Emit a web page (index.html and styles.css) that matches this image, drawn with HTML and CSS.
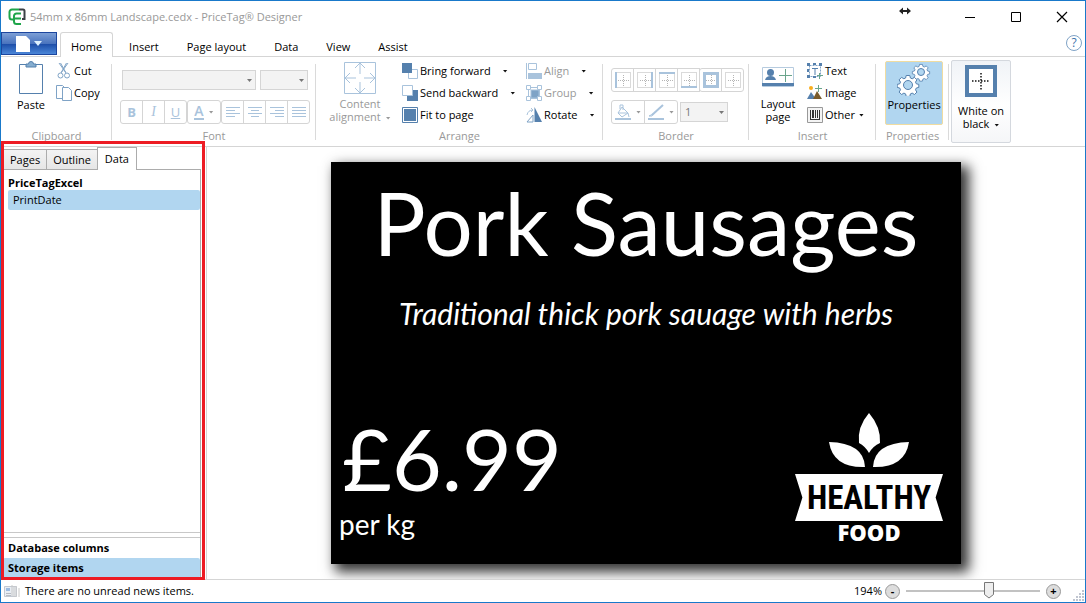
FILE: index.html
```html
<!DOCTYPE html>
<html lang="en">
<head>
<meta charset="utf-8">
<title>PriceTag Designer</title>
<link rel="stylesheet" href="styles.css">
</head>
<body>
<div class="window">
  <header class="titlebar">
    <svg class="app-icon" width="18" height="18" viewBox="0 0 18 18" fill="none" stroke-width="2">
      <path d="M11 1.500H4a2.500 2.500 0 0 0-2.500 2.500v5A2.500 2.500 0 0 0 4 11.500h2M13 5.500H8.500A2.500 2.500 0 0 0 6 8v5.500A2.500 2.500 0 0 0 8.500 16H13M6 10.500h7" stroke="#1ea54a"/>
      <path d="M11 1.500h4a1.500 1.500 0 0 1 1.500 1.500v8H14" stroke="#3b4045"/>
    </svg>
    <h1 class="title">54mm x 86mm Landscape.cedx - PriceTag® Designer</h1>
    <svg class="resize-mark" width="12" height="8" viewBox="0 0 12 8"><path d="M0 4l4-3.500v2.500h4V.5L12 4 8 7.500V5H4v2.500z" fill="#222"/></svg>
    <div class="window-buttons">
      <button class="win-btn" aria-label="Minimize"><svg width="12" height="12"><path d="M1 6.500h10" stroke="#000"/></svg></button>
      <button class="win-btn" aria-label="Maximize"><svg width="12" height="12"><path d="M1.500 1.500h9v9h-9z" fill="none" stroke="#000"/></svg></button>
      <button class="win-btn" aria-label="Close"><svg width="12" height="12"><path d="M1 1l10 10M11 1L1 11" stroke="#000" stroke-width="1.200"/></svg></button>
    </div>
  </header>

  <nav class="ribbon-tabs">
    <button class="file-btn" aria-label="File">
      <svg width="14" height="16"><path d="M0 0h10l4 4v12H0z" fill="#fff"/></svg>
      <svg width="8" height="5"><path d="M0 0h8L4 5z" fill="#dff1ff"/></svg>
    </button>
    <button class="tab tab-active">Home</button>
    <button class="tab">Insert</button>
    <button class="tab">Page layout</button>
    <button class="tab">Data</button>
    <button class="tab">View</button>
    <button class="tab">Assist</button>
    <button class="help" aria-label="Help">?</button>
  </nav>

  <section class="ribbon">
    <div class="group group-clipboard">
      <div class="group-body">
        <button class="big-btn paste">
          <svg width="26" height="34" viewBox="0 0 26 34"><path d="M1.500 3.500h23v29h-23z" fill="#fff" stroke="#5580ad"/><path d="M8 6V3h2.500a2.500 2.500 0 0 1 5 0H18v3z" fill="#86aed0" stroke="#5580ad"/></svg>
          <span>Paste</span>
        </button>
        <div class="stack stack-edit">
          <button class="cmd"><svg width="16" height="16" viewBox="0 0 16 16" fill="none" stroke="#7fa3c6"><path d="M3 0l7 10M12 0L5 10M4.500 0l5 9M10.500 0l-5 9"/><circle cx="4.500" cy="12.500" r="2.500"/><circle cx="11" cy="12.500" r="2.500"/></svg>Cut</button>
          <button class="cmd"><svg width="16" height="16" viewBox="0 0 16 16" fill="#fff" stroke="#7fa3c6"><path d="M.5.500h6l3 3v10h-9z"/><path d="M6.500 2.500h6l3 3v10h-9z"/></svg>Copy</button>
        </div>
      </div>
      <h2 class="group-label">Clipboard</h2>
    </div>

    <div class="group group-font">
      <div class="group-body rows">
        <div class="row row-top">
          <span class="combo combo-font"><select aria-label="Font family" disabled><option></option></select></span>
          <span class="combo combo-size"><select aria-label="Font size" disabled><option></option></select></span>
        </div>
        <div class="row">
          <button class="tool" disabled aria-label="Bold"><b>B</b></button>
          <button class="tool" disabled aria-label="Italic"><i>I</i></button>
          <button class="tool seg-end" disabled aria-label="Underline"><u>U</u></button>
          <button class="tool tool-wide seg-start seg-end" disabled aria-label="Font color"><span class="fontcolor">A</span><span class="caret caret-off"></span></button>
          <button class="tool seg-start" disabled aria-label="Align left"><svg width="14" height="12"><path d="M0 1.500h14M0 4.500h9M0 7.500h14M0 10.500h9" stroke="#a9c3dc"/></svg></button>
          <button class="tool" disabled aria-label="Align center"><svg width="14" height="12"><path d="M0 1.500h14M3 4.500h8M0 7.500h14M3 10.500h8" stroke="#a9c3dc"/></svg></button>
          <button class="tool" disabled aria-label="Align right"><svg width="14" height="12"><path d="M0 1.500h14M5 4.500h9M0 7.500h14M5 10.500h9" stroke="#a9c3dc"/></svg></button>
          <button class="tool seg-end" disabled aria-label="Justify"><svg width="14" height="12"><path d="M0 1.500h14M0 4.500h14M0 7.500h14M0 10.500h14" stroke="#a9c3dc"/></svg></button>
        </div>
      </div>
      <h2 class="group-label">Font</h2>
    </div>

    <div class="group group-arrange">
      <div class="group-body">
        <button class="big-btn content-align" disabled>
          <svg width="34" height="34" viewBox="0 0 34 34" fill="none" stroke="#a9c3dc"><path d="M1.500 1.500h31v31h-31z"/><path d="M17 13V3M12 7l5-5 5 5M17 21v10M12 27l5 5 5-5M13 17H3M7 12l-5 5 5 5M21 17h10M27 12l5 5-5 5"/></svg>
          <span>Content<br>alignment <span class="caret caret-off"></span></span>
        </button>
        <div class="stack stack-order">
          <button class="cmd"><svg width="16" height="16"><path d="M6.500 6.500h9v9h-9z" fill="#fff" stroke="#a9c3dc"/><path d="M0 0h10v10H0z" fill="#5580ad"/></svg>Bring forward<span class="caret caret-far"></span></button>
          <button class="cmd"><svg width="16" height="16"><path d="M5 5h11v11H5z" fill="#5580ad"/><path d="M.5.500h10v10H.5z" fill="#fff" stroke="#a9c3dc"/></svg>Send backward<span class="caret caret-far"></span></button>
          <button class="cmd"><svg width="16" height="16"><path d="M.5.500h15v15H.5z" fill="#fff" stroke="#5580ad"/><path d="M2 2h12v12H2z" fill="#5580ad"/></svg>Fit to page</button>
        </div>
        <div class="stack">
          <button class="cmd" disabled><svg width="16" height="16" fill="none" stroke="#a9c3dc"><path d="M.5 0v16M2.500.500h8v6h-8z"/><path d="M2 10h14v6H2z" fill="#a9c3dc" stroke="none"/></svg>Align<span class="caret caret-far"></span></button>
          <button class="cmd" disabled><svg width="16" height="16" fill="#fff" stroke="#a9c3dc"><path d="M5 5h8v8H5z" fill="#7fa3c6"/><path d="M2.500 2.500h11v11h-11z" fill="none"/><path d="M.5.500h4v4h-4zM11.500.500h4v4h-4zM.5 11.500h4v4h-4zM11.500 11.500h4v4h-4z"/></svg>Group<span class="caret caret-far"></span></button>
          <button class="cmd"><svg width="16" height="16"><path d="M8.500 0v15H16z" fill="#5580ad"/><path d="M7 8v7H1z" fill="#fff" stroke="#7fa3c6"/><path d="M1 8q1-5 6-5M5 1l2 2-2 2" fill="none" stroke="#a9c3dc"/></svg>Rotate<span class="caret caret-far"></span></button>
        </div>
      </div>
      <h2 class="group-label">Arrange</h2>
    </div>

    <div class="group group-border">
      <svg class="defs" width="0" height="0"><defs><g id="cell" fill="none" stroke="#b5b5b5" stroke-dasharray="1 1"><path d="M.5.500h15v15H.5zM8.500 3v11M3 8.500h11"/></g></defs></svg>
      <div class="group-body rows">
        <div class="row">
          <button class="tool" disabled aria-label="Left border"><svg width="16" height="16"><use href="#cell"/><path d="M0 0h2v16H0z" fill="#a9c3dc"/></svg></button>
          <button class="tool" disabled aria-label="Right border"><svg width="16" height="16"><use href="#cell"/><path d="M14 0h2v16h-2z" fill="#a9c3dc"/></svg></button>
          <button class="tool" disabled aria-label="Top border"><svg width="16" height="16"><use href="#cell"/><path d="M0 0h16v2H0z" fill="#a9c3dc"/></svg></button>
          <button class="tool" disabled aria-label="Bottom border"><svg width="16" height="16"><use href="#cell"/><path d="M0 14h16v2H0z" fill="#a9c3dc"/></svg></button>
          <button class="tool seg-start" disabled aria-label="All borders"><svg width="16" height="16"><use href="#cell"/><path d="M1.500 1.500h13v13h-13z" fill="none" stroke="#a9c3dc" stroke-width="3"/></svg></button>
          <button class="tool seg-end" disabled aria-label="No border"><svg width="16" height="16"><use href="#cell"/></svg></button>
        </div>
        <div class="row">
          <button class="tool tool-wide" disabled aria-label="Fill color"><svg width="16" height="16" fill="none" stroke="#a9c3dc"><path d="M7 3l6 6-6 4-4-4zM5 5V1h3v5M3 9h10l1 4"/><path d="M0 15h16" stroke-width="2"/></svg><span class="caret caret-off"></span></button>
          <button class="tool tool-wide seg-end" disabled aria-label="Line color"><svg width="16" height="16" fill="none" stroke="#a9c3dc"><path d="M4 11L15 1" stroke-width="2"/><path d="M1 12l4-2-1 2z"/><path d="M0 15h16" stroke-width="2"/></svg><span class="caret caret-off"></span></button>
          <span class="combo combo-line"><select aria-label="Line width" disabled><option>1</option></select></span>
        </div>
      </div>
      <h2 class="group-label">Border</h2>
    </div>

    <div class="group group-insert">
      <div class="group-body">
        <button class="big-btn layout-page">
          <svg width="34" height="34" viewBox="0 0 34 34"><path d="M1.500 6.500h31v19h-31z" fill="#fff" stroke="#b6cbdf"/><path d="M1 22h32v3H1z" fill="#5580ad"/><circle cx="9.500" cy="11.500" r="3.500" fill="#5580ad"/><path d="M4 19q1-4 5.500-4t5.500 4z" fill="#5580ad"/><path d="M24.500 8v13M18 14.500h13" stroke="#6aa58c"/></svg>
          <span>Layout<br>page</span>
        </button>
        <div class="stack">
          <button class="cmd"><svg width="16" height="16" fill="none"><path d="M2.500 2.500h11v11h-11z" stroke="#7fa3c6" stroke-dasharray="2 1"/><path d="M0 0h3v3H0zM6 0h3v2H6zM12 0h3v3h-3zM0 12h3v3H0zM0 6h2v3H0zM6 13h3v2H6z" fill="#5580ad"/><path d="M5 5.500h6M8 5v7" stroke="#5580ad"/><path d="M12.500 10v6M10 12.500h6" stroke="#6aa58c"/></svg>Text</button>
          <button class="cmd"><svg width="16" height="16"><path d="M0 14l4-7 5 7z" fill="#5580ad"/><path d="M6 14l4-8 5 8z" fill="#7a5c2c"/><circle cx="4" cy="3" r="2" fill="#f9ad1c"/><path d="M11.500 0v7M8 3.500h7" stroke="#6aa58c"/></svg>Image</button>
          <button class="cmd"><svg width="16" height="16"><path d="M.5.500h15v15H.5z" fill="#f4f4f4" stroke="#999"/><path d="M3 3h1v10H3zM5 3h2v8H5zM8 3h1v8H8zM10 3h1v8h-1zM12 3h1v10h-1zM4 12h8v1H4z" fill="#333"/></svg>Other<span class="caret"></span></button>
        </div>
      </div>
      <h2 class="group-label">Insert</h2>
    </div>

    <div class="group group-properties">
      <div class="group-body">
        <button class="big-btn properties" aria-pressed="true">
          <svg width="34" height="34" viewBox="0 0 34 34" fill="#fff" stroke="#5580ad" stroke-linejoin="round">
            <defs><path id="gear" d="M-1.800-9.500h3.600l.6 2.500 1.800.8 2.300-1.400 2.400 2.400-1.400 2.300.8 1.700 2.500.600v3l-2.500.600-.8 1.800 1.400 2.300-2.400 2.400-2.300-1.400-1.800.8-.6 2.500h-3.600l-.6-2.500-1.700-.8-2.300 1.400-2.500-2.400 1.400-2.300-.8-1.800-2.500-.6v-3l2.500-.6.800-1.700-1.400-2.300 2.500-2.400 2.300 1.400 1.700-.8z"/></defs>
            <use href="#gear" transform="translate(24 10) scale(.8)"/><circle cx="24" cy="10" r="3.500" fill="#b1d6f0"/>
            <use href="#gear" transform="translate(11 23)"/><circle cx="11" cy="23" r="4.500" fill="#b1d6f0"/>
          </svg>
          <span>Properties</span>
        </button>
      </div>
      <h2 class="group-label">Properties</h2>
    </div>

    <button class="style-card">
      <svg width="32" height="32"><path d="M2 2h28v28H2z" fill="#fff" stroke="#5580ad" stroke-width="4"/><path d="M16 8v17M7 16h18" stroke="#111" stroke-width="1.500" stroke-dasharray="1.500 1.500"/></svg>
      <span>White on<br>black <span class="caret"></span></span>
    </button>
  </section>

  <main class="main">
    <aside class="sidebar">
      <div class="side-tabs">
        <button class="side-tab">Pages</button>
        <button class="side-tab">Outline</button>
        <button class="side-tab side-tab-active">Data</button>
      </div>
      <div class="side-panel">
        <div class="data-list">
          <h3 class="source">PriceTagExcel</h3>
          <button class="field">PrintDate</button>
        </div>
        <div class="categories">
          <button class="category">Database columns</button>
          <button class="category category-active">Storage items</button>
        </div>
      </div>
      <div class="highlight"></div>
    </aside>

    <section class="canvas">
      <article class="card">
        <h2 class="product">Pork Sausages</h2>
        <p class="description">Traditional thick pork sauage with herbs</p>
        <div class="card-foot">
          <div>
            <p class="price">£6.99</p>
            <p class="unit">per kg</p>
          </div>
          <div class="badge">
            <svg width="80" height="56" viewBox="0 0 80 56" fill="#fff"><path d="M40 0Q28 14 30 30q6 3 10 10 4-7 11-10Q52 14 40 0z"/><path d="M0 29q35 1 36 25Q4 55 0 29z"/><path d="M80 29q-35 1-36 25 32 1 36-25z"/></svg>
            <span class="ribbon-word">HEALTHY</span>
            <span class="food-word">FOOD</span>
          </div>
        </div>
      </article>
    </section>
  </main>

  <footer class="status">
    <svg width="16" height="14"><path d="M.5 2.500h12v10H.5z" fill="#e9eef4" stroke="#c3c9d2"/><path d="M2 4h4v3H2z" fill="#9dbbe0"/><path d="M8 1v11M10 2v11M12 2v11M15 4v9" stroke="#c8c8c8"/><path d="M2 9.500h5M2 11.500h5" stroke="#b7bcc4"/></svg>
    <span class="news">There are no unread news items.</span>
    <label class="zoom-value" for="zoom">194%</label>
    <button class="round" aria-label="Zoom out">-</button>
    <input class="slider" id="zoom" type="range" min="0" max="100" value="63">
    <button class="round" aria-label="Zoom in">+</button>
    <svg class="grip" width="12" height="12" fill="#c0c5d0"><path d="M9 0h2v2H9zM6 3h2v2H6zM9 3h2v2H9zM3 6h2v2H3zM6 6h2v2H6zM9 6h2v2H9zM0 9h2v2H0zM3 9h2v2H3zM6 9h2v2H6zM9 9h2v2H9z"/></svg>
  </footer>
</div>
</body>
</html>
```
FILE: styles.css
```css
* { box-sizing: border-box; }

body { margin: 0; }

body, button, select {
  font-family: "Open Sans", "Noto Sans", sans-serif;
  font-size: 11px;
  line-height: 14px;
  color: #000;
}

button { margin: 0; padding: 0; border: 0; background: none; }
h1, h2, h3, p { margin: 0; font-weight: normal; }
svg { flex: none; display: block; }

.window {
  display: flex;
  flex-direction: column;
  min-height: 100vh;
  border: 1px solid #1979ca;
  background: #fff;
}

/* Title bar */
.titlebar { display: flex; align-items: center; height: 31px; padding-left: 7px; }
.title { margin-left: 4px; font-size: 11px; color: #999; flex: 1; }
.resize-mark { margin-bottom: 12px; margin-right: 36px; }
.window-buttons { display: flex; }
.win-btn { display: grid; place-items: center; width: 46px; height: 30px; }

/* Ribbon tabs */
.ribbon-tabs { display: flex; height: 25px; border-bottom: 1px solid #d5d5d5; }
.file-btn {
  display: flex; align-items: center; justify-content: center; gap: 4px;
  width: 56px; height: 23px; margin-right: 3px;
  border: 1px solid #1c469e;
  background: linear-gradient(#7d9fd6, #4a74be 50%, #1a4aa5 50%, #4a86d8);
}
.tab { height: 25px; padding: 4px 14px 0; }
.tab-active { padding: 3px 10px 0; margin-right: 2px; border: 1px solid #d5d5d5; border-bottom: 0; border-radius: 3px 3px 0 0; background: #fff; }
.help {
  width: 16px; height: 16px; margin: 3px 3px 0 auto;
  border: 1px solid #7fa3c6; border-radius: 50%;
  font-size: 12px; color: #3d73ab;
}

/* Ribbon */
.ribbon { display: flex; height: 90px; padding-top: 3px; border-bottom: 1px solid #d5d5d5; }
.group { position: relative; display: flex; flex-direction: column; flex: none; height: 82px; }
.group::after { content: ""; position: absolute; right: 0; top: 4px; bottom: 2px; width: 1px; background: #dadada; }
.group-clipboard { width: 111px; }
.group-font { width: 204px; }
.group-arrange { width: 287px; }
.group-border { width: 146px; }
.group-insert { width: 127px; }
.group-properties { width: 73px; }
.group-body { display: flex; height: 68px; }
.group-label { height: 14px; line-height: 15px; font-size: 11px; text-align: center; color: #999; }
.defs { position: absolute; }

.big-btn { display: flex; flex-direction: column; align-items: center; gap: 1px; height: 64px; padding-top: 1px; line-height: 13px; text-align: center; }
.big-btn:disabled, .cmd:disabled { color: #999; }
.paste { width: 60px; gap: 3px; }
.content-align { width: 88px; gap: 2px; }
.layout-page { width: 58px; gap: 2px; }
.properties {
  width: 58px; margin: 1px 0 0 9px; padding: 0; gap: 2px;
  border: 1px solid #f0dca0; border-radius: 2px;
  background: #b1d6f0;
}

.stack { display: flex; flex-direction: column; padding-top: 2px; }
.stack-edit { margin-left: -5px; }
.stack-order { width: 124px; margin-left: -2px; }
.cmd { display: flex; align-items: center; gap: 2px; height: 22px; padding-bottom: 4px; white-space: nowrap; }

.caret {
  display: inline-block; width: 5px; height: 3px; margin-left: 2px;
  vertical-align: middle;
  background: #111;
  clip-path: polygon(0 0, 100% 0, 50% 100%);
}
.caret-off { background: #999; }
.caret-far { margin-left: 10px; }

.rows { flex-direction: column; gap: 8px; padding: 8px 0 0 8px; }
.row { display: flex; }
.row-top { gap: 4px; padding: 2px 0 2px 2px; }

.combo { position: relative; display: block; height: 20px; }
.combo select {
  appearance: none; display: block; width: 100%; height: 100%; padding: 0 4px;
  border: 1px solid #d5d5d5; border-radius: 0;
  background: #f3f3f3; color: #777; opacity: 1;
}
.combo::after {
  content: ""; position: absolute; right: 4px; top: 9px; width: 5px; height: 3px;
  background: #777; clip-path: polygon(0 0, 100% 0, 50% 100%);
}
.combo-font { width: 134px; }
.combo-size { width: 48px; }
.combo-line { width: 48px; margin: 2px 0 0 2px; }

.tool {
  display: flex; align-items: center; justify-content: center; gap: 3px;
  width: 23px; height: 24px; margin-right: -1px;
  border: 1px solid #d5d5d5; color: #a9c3dc; font-size: 13px;
}
.tool:first-child { border-radius: 3px 0 0 3px; }
.tool.seg-end { margin-right: 0; border-radius: 0 3px 3px 0; }
.tool.seg-start { border-radius: 3px 0 0 3px; }
.tool.seg-start.seg-end { border-radius: 3px; }
.tool i { font-family: "Liberation Serif", serif; font-size: 14px; }
.tool-wide { width: 34px; }
.fontcolor { font-size: 14px; border-bottom: 2px solid #a9c3dc; font-weight: 600; }

.style-card {
  display: flex; flex-direction: column; align-items: center; gap: 7px;
  width: 60px; height: 83px; margin-left: 2px; padding-top: 4px;
  border: 1px solid #d4d8de; border-radius: 2px;
  background: linear-gradient(#f0f3f7, #fff 55%, #f5f6f8);
  line-height: 13px;
}

/* Main area */
.main { display: flex; flex: 1; }
.sidebar {
  position: relative; display: flex; flex-direction: column;
  flex: none; width: 206px; padding: 0 5px 1px 2px;
  border-right: 1px solid #d5d5d5;
}
.side-tabs { display: flex; align-items: flex-end; height: 22px; }
.side-tab { height: 20px; padding: 0 6px; margin-right: -1px; border: 1px solid #acacac; border-bottom: 0; background: linear-gradient(#f3f3f3, #e6e6e6); }
.side-tab-active { position: relative; height: 23px; margin-bottom: -1px; padding: 0 7px; background: #fff; }
.side-panel { display: flex; flex-direction: column; flex: 1; border: 1px solid #acacac; border-width: 1px 1px 0 0; }
.data-list { display: flex; flex-direction: column; flex: 1; padding: 5px 0 0 5px; border-bottom: 1px solid #c8c8c8; }
.source { font-size: 11px; font-weight: bold; line-height: 15px; }
.field { height: 20px; padding-left: 5px; border-radius: 2px; background: #b1d6f0; text-align: left; }
.categories { display: flex; flex-direction: column; margin-top: 4px; border-top: 1px solid #c8c8c8; }
.category { height: 20px; padding-left: 5px; font-weight: bold; text-align: left; }
.category-active { border-radius: 2px; background: #b1d6f0; }
.highlight { position: absolute; top: -6px; right: 1px; bottom: -1px; left: 0; border: 3px solid #ed1c24; pointer-events: none; }

/* Price tag */
.canvas { display: flex; flex: 1; align-items: center; justify-content: center; overflow: hidden; }
.card {
  display: flex; flex-direction: column;
  width: 630px; aspect-ratio: 630 / 402;
  padding: 9px 8px 20px;
  background: #000; color: #fff;
  box-shadow: 6px 6px 12px 2px #000c;
  font-family: Lato, sans-serif;
}
.product { font-size: 87px; line-height: 104px; text-align: center; }
.description { margin-top: 20px; font-size: 30px; line-height: 36px; font-style: italic; text-align: center; }
.card-foot { display: flex; flex: 1; align-items: flex-end; justify-content: space-between; }
.price { padding-left: 3px; font-size: 86px; line-height: 92px; }
.unit { font-size: 28px; line-height: 40px; }
.badge { display: flex; flex-direction: column; align-items: center; margin-right: 10px; }
.ribbon-word {
  width: 148px; margin-top: 5px;
  background: #fff; color: #000;
  clip-path: polygon(0 0, 100% 0, 95% 50%, 100% 100%, 0 100%, 5% 50%);
  font-family: "Roboto Condensed", Roboto, sans-serif;
  font-size: 33px; font-weight: 700; line-height: 47px; text-align: center;
}
.food-word { font-family: "Open Sans", sans-serif; font-size: 22px; font-weight: 800; line-height: 23px; }

/* Status bar */
.status { display: flex; align-items: center; height: 23px; padding-left: 3px; border-top: 1px solid #d5d5d5; }
.news { flex: 1; margin-left: 5px; }
.zoom-value { margin-right: 3px; }
.round { width: 15px; height: 15px; border: 1px solid #999; border-radius: 50%; background: #ddd; font-weight: bold; line-height: 12px; }
.slider { appearance: none; width: 134px; height: 18px; margin: 0 6px; background: none; }
.slider::-webkit-slider-runnable-track { height: 2px; background: #c2c2c2; }
.slider::-webkit-slider-thumb {
  appearance: none; width: 10px; height: 17px; margin-top: -8px;
  background: url("data:image/svg+xml,%3Csvg xmlns='http://www.w3.org/2000/svg' width='10' height='17'%3E%3Cpath d='M.5.5h9v12L5 16 .5 12.500z' fill='%23eee' stroke='%23777'/%3E%3C/svg%3E");
}
.grip { align-self: flex-end; margin-left: 12px; }
```
